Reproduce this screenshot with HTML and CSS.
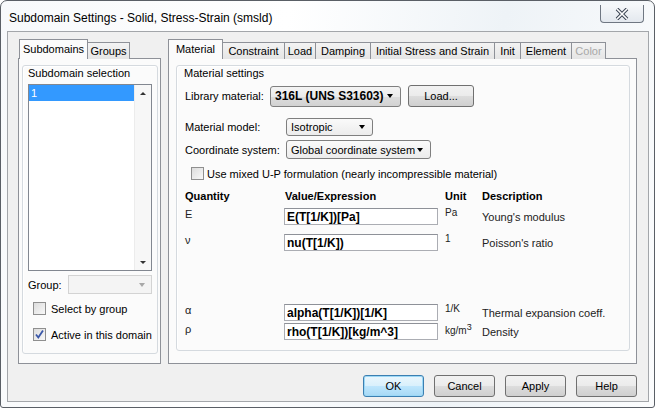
FILE: index.html
```html
<!DOCTYPE html>
<html lang="en">
<head>
    <meta charset="UTF-8">
    <title>Subdomain Settings - Solid, Stress-Strain (smsld)</title>
    <link rel="stylesheet" href="styles.css">
</head>
<body>
    <div class="window">
        <div class="title-bar">
            <span class="title">Subdomain Settings - Solid, Stress-Strain (smsld)</span>
            <div class="close-btn">
                <svg width="18" height="12" viewBox="0 0 18 12">
                    <path d="M4 1 L14 11 M14 1 L4 11" stroke="#3b4453" stroke-width="3.6" fill="none"/>
                    <path d="M4 1 L14 11 M14 1 L4 11" stroke="#fff" stroke-width="1.6" fill="none"/>
                </svg>
            </div>
        </div>

        <div class="client">
            <div class="tab-row">
                <!-- left: subdomains -->
                <div class="tab-control left-tabs">
                    <div class="tabs">
                        <div class="tab active tab-sub">Subdomains</div>
                        <div class="tab tab-groups">Groups</div>
                    </div>
                    <div class="tab-panel">
                        <div class="group sub-group">
                            <div class="group-title">Subdomain selection</div>
                            <div class="listbox">
                                <div class="list-items">
                                    <div class="list-item selected">1</div>
                                </div>
                                <div class="scrollbar">
                                    <span class="arrow-up"></span>
                                    <span class="arrow-down"></span>
                                </div>
                            </div>
                            <div class="group-row">
                                <span>Group:</span>
                                <div class="combo disabled"><span class="caret grey"></span></div>
                            </div>
                            <label class="check-row select-row">
                                <span class="checkbox"></span>
                                Select by group
                            </label>
                            <label class="check-row active-row">
                                <span class="checkbox">
                                    <svg width="11" height="11" viewBox="0 0 11 11">
                                        <path d="M2 5.5 L4.3 8.5 L9 1.5" stroke="#3a57a8" stroke-width="1.8" fill="none"/>
                                    </svg>
                                </span>
                                Active in this domain
                            </label>
                        </div>
                    </div>
                </div>

                <!-- right: material -->
                <div class="tab-control right-tabs">
                    <div class="tabs">
                        <div class="tab active" style="width: 53px">Material</div>
                        <div class="tab" style="width: 61px">Constraint</div>
                        <div class="tab" style="width: 30px">Load</div>
                        <div class="tab" style="width: 54px">Damping</div>
                        <div class="tab" style="width: 123px">Initial Stress and Strain</div>
                        <div class="tab" style="width: 25px">Init</div>
                        <div class="tab" style="width: 50px">Element</div>
                        <div class="tab disabled-tab" style="width: 33px">Color</div>
                    </div>
                    <div class="tab-panel">
                        <div class="group mat-group">
                            <div class="group-title">Material settings</div>
                            <div class="form-row lib-row">
                                <span class="label lib-label">Library material:</span>
                                <div class="dropdown lib-drop"><b>316L (UNS S31603)</b><span class="caret"></span></div>
                                <button class="btn load-btn">Load...</button>
                            </div>
                            <div class="form-row model-row">
                                <span class="label">Material model:</span>
                                <div class="dropdown model-drop">Isotropic<span class="caret"></span></div>
                            </div>
                            <div class="form-row coord-row">
                                <span class="label">Coordinate system:</span>
                                <div class="dropdown coord-drop">Global coordinate system<span class="caret"></span></div>
                            </div>
                            <label class="check-row mixed-row">
                                <span class="checkbox"></span>
                                Use mixed U-P formulation (nearly incompressible material)
                            </label>

                            <div class="param-table">
                                <div class="th">Quantity</div>
                                <div class="th">Value/Expression</div>
                                <div class="th">Unit</div>
                                <div class="th">Description</div>

                                <div class="qty">E</div>
                                <div><input class="expr" value="E(T[1/K])[Pa]"></div>
                                <div class="unit">Pa</div>
                                <div class="desc">Young's modulus</div>

                                <div class="qty">ν</div>
                                <div><input class="expr" value="nu(T[1/K])"></div>
                                <div class="unit">1</div>
                                <div class="desc">Poisson's ratio</div>

                                <div class="spacer"></div>

                                <div class="qty">α</div>
                                <div><input class="expr" value="alpha(T[1/K])[1/K]"></div>
                                <div class="unit">1/K</div>
                                <div class="desc">Thermal expansion coeff.</div>

                                <div class="qty">ρ</div>
                                <div><input class="expr" value="rho(T[1/K])[kg/m^3]"></div>
                                <div class="unit">kg/m<sup>3</sup></div>
                                <div class="desc">Density</div>
                            </div>
                        </div>
                    </div>
                </div>
            </div>

            <div class="button-row">
                <button class="btn default-btn">OK</button>
                <button class="btn">Cancel</button>
                <button class="btn">Apply</button>
                <button class="btn">Help</button>
            </div>
        </div>
    </div>
</body>
</html>
```

FILE: styles.css
```css
body {
    margin: 0;
    padding: 0;
    font-family: 'Liberation Sans', Arial, sans-serif;
    font-size: 11px;
    color: #000;
    background-color: #fff;
}

.window {
    width: 653px;
    height: 406px;
    border: 1px solid #5a5f66;
    border-radius: 7px 7px 3px 3px;
    background: linear-gradient(100deg, #f7f9fb 0%, #ffffff 40%, #eef3f7 70%, #fbfcfd 100%);
    display: flex;
    flex-direction: column;
}

.title-bar {
    height: 30px;
    display: flex;
    align-items: flex-start;
    justify-content: space-between;
    padding: 0 10px 0 8px;
}

.title {
    font-size: 12px;
    margin-top: 10px;
    color: #000;
}

.close-btn {
    margin-top: 4px;
    width: 42px;
    height: 17px;
    border: 1px solid #6f7782;
    border-radius: 0 0 4px 4px;
    border-top: none;
    background: linear-gradient(#f6f8fa, #e3e8ee);
    display: flex;
    align-items: center;
    justify-content: center;
}

.client {
    margin: 0 5px 5px 6px;
    flex: 1;
    background-color: #f0f0f0;
    border: 1px solid #a3a6aa;
    padding: 8px 10px 0 10px;
}

.tab-row {
    display: flex;
    gap: 7px;
}

.tab-control {
    display: flex;
    flex-direction: column;
}

.left-tabs {
    width: 143px;
}

.right-tabs {
    width: 469px;
}

.tabs {
    display: flex;
    align-items: flex-end;
    height: 19px;
    margin-bottom: -1px;
    position: relative;
    z-index: 1;
}

.tab {
    height: 16px;
    line-height: 16px;
    text-align: center;
    border: 1px solid #8e9198;
    border-bottom: none;
    margin-right: -1px;
    background: linear-gradient(#f3f3f3, #e5e5e5);
    white-space: nowrap;
    box-sizing: content-box;
}

.tab.active {
    height: 19px;
    line-height: 18px;
    background-color: #fbfbfb;
    background-image: none;
}

.tab-sub {
    width: 67px;
    margin-left: 1px;
}

.tab-groups {
    width: 41px;
}

.disabled-tab {
    color: #a8a8a8;
}

.tab-panel {
    height: 298px;
    border: 1px solid #8e9198;
    background-color: #fbfbfb;
    padding: 6px 6px 0 7px;
}

.left-tabs .tab-panel {
    padding: 6px 2px 0 3px;
}

.group {
    border: 1px solid #d5dadf;
    border-radius: 3px;
    box-shadow: inset 1px 1px 0 #fff;
}

.group-title {
    height: 13px;
    line-height: 13px;
    margin-top: 1px;
}

.sub-group {
    height: 287px;
    padding: 0 5px;
}

.listbox {
    margin-top: 4px;
    height: 185px;
    border: 1px solid #828790;
    background-color: #fff;
    display: flex;
}

.list-items {
    flex: 1;
}

.list-item {
    height: 16px;
    line-height: 16px;
    padding-left: 2px;
}

.list-item.selected {
    background-color: #3399ff;
    color: #fff;
}

.scrollbar {
    width: 16px;
    background-color: #f7f7f7;
    border-left: 1px solid #ececec;
    display: flex;
    flex-direction: column;
    justify-content: space-between;
    align-items: center;
    padding: 7px 0 6px 0;
}

.arrow-up {
    width: 0;
    height: 0;
    border-left: 3px solid transparent;
    border-right: 3px solid transparent;
    border-bottom: 3px solid #333;
}

.arrow-down {
    width: 0;
    height: 0;
    border-left: 3px solid transparent;
    border-right: 3px solid transparent;
    border-top: 3px solid #333;
}

.group-row {
    display: flex;
    align-items: center;
    justify-content: space-between;
    margin-top: 4px;
}

.combo {
    width: 84px;
    height: 19px;
    border: 1px solid #d3d3d3;
    background-color: #f4f4f4;
    display: flex;
    align-items: center;
    justify-content: flex-end;
    padding-right: 6px;
    box-sizing: border-box;
}

.caret {
    display: inline-block;
    width: 0;
    height: 0;
    border-left: 3.5px solid transparent;
    border-right: 3.5px solid transparent;
    border-top: 4px solid #000;
}

.caret.grey {
    border-top-color: #a8a8a8;
}

.check-row {
    display: flex;
    align-items: center;
    gap: 5px;
    margin-left: 5px;
}

.select-row {
    margin-top: 8px;
}

.active-row {
    margin-top: 13px;
}

.checkbox {
    width: 11px;
    height: 11px;
    border: 1px solid #8f8f8f;
    background: linear-gradient(135deg, #dcdcdc, #f8f8f8);
    display: inline-flex;
    align-items: center;
    justify-content: center;
}

.mat-group {
    height: 284px;
    padding: 0 8px 0 6px;
}

.mat-group .group-title {
    margin-left: 1px;
}

.form-row {
    display: flex;
    align-items: center;
    margin-left: 2px;
}

.label {
    width: 101px;
    flex-shrink: 0;
}

.lib-label {
    width: 85px;
}

.lib-row {
    margin-top: 5px;
}

.model-row {
    margin-top: 11px;
}

.coord-row {
    margin-top: 4px;
}

.dropdown {
    display: flex;
    align-items: center;
    justify-content: space-between;
    border: 1px solid #7f7f7f;
    border-radius: 3px;
    background: linear-gradient(#f4f4f4 0%, #ebebeb 50%, #dddddd 51%, #d2d2d2 100%);
    padding: 0 7px 0 4px;
    box-sizing: border-box;
}

.lib-drop {
    width: 131px;
    height: 21px;
    font-size: 12px;
}

.model-drop {
    width: 87px;
    height: 18px;
    background: linear-gradient(#fafafa, #ececec);
}

.coord-drop {
    width: 145px;
    height: 19px;
    background: linear-gradient(#fafafa, #ececec);
}

.btn {
    font-family: 'Liberation Sans', Arial, sans-serif;
    font-size: 11px;
    color: #000;
    border: 1px solid #707070;
    border-radius: 3px;
    background: linear-gradient(#f2f2f2 0%, #ebebeb 50%, #dddddd 51%, #cfcfcf 100%);
    padding: 0;
}

.load-btn {
    margin-left: 7px;
    width: 66px;
    height: 22px;
}

.mixed-row {
    margin-top: 8px;
    margin-left: 8px;
    gap: 3px;
}

.param-table {
    display: grid;
    grid-template-columns: 100px 160px 37px 1fr;
    grid-template-rows: 17px 26px 26px 44px 19px 19px;
    align-items: start;
    margin-top: 10px;
    margin-left: 2px;
}

.th {
    font-weight: bold;
}

.qty {
    padding-top: 1px;
    color: #222;
}

.spacer {
    grid-column: 1 / -1;
}

.expr {
    width: 154px;
    height: 17px;
    box-sizing: border-box;
    border: 1px solid #abadb3;
    border-top-color: #8e9198;
    font-family: 'Liberation Sans', Arial, sans-serif;
    font-size: 12px;
    font-weight: bold;
    padding: 0 2px;
    margin: 1px 0 0 -1px;
    background-color: #fff;
}

.unit {
    font-size: 10px;
    color: #222;
}

.unit sup {
    font-size: 9px;
}

.desc {
    padding-top: 4px;
    color: #222;
}

.button-row {
    display: flex;
    justify-content: flex-end;
    gap: 10px;
    margin-top: 11px;
    padding-right: 1px;
}

.button-row .btn {
    width: 61px;
    height: 22px;
}

.default-btn {
    border-color: #3c7fb1;
    box-shadow: inset 0 0 0 1px #9cd8f6;
    background: linear-gradient(#eaf6fd 0%, #d9f0fc 50%, #bee6fd 51%, #a7d9f5 100%);
}
```
